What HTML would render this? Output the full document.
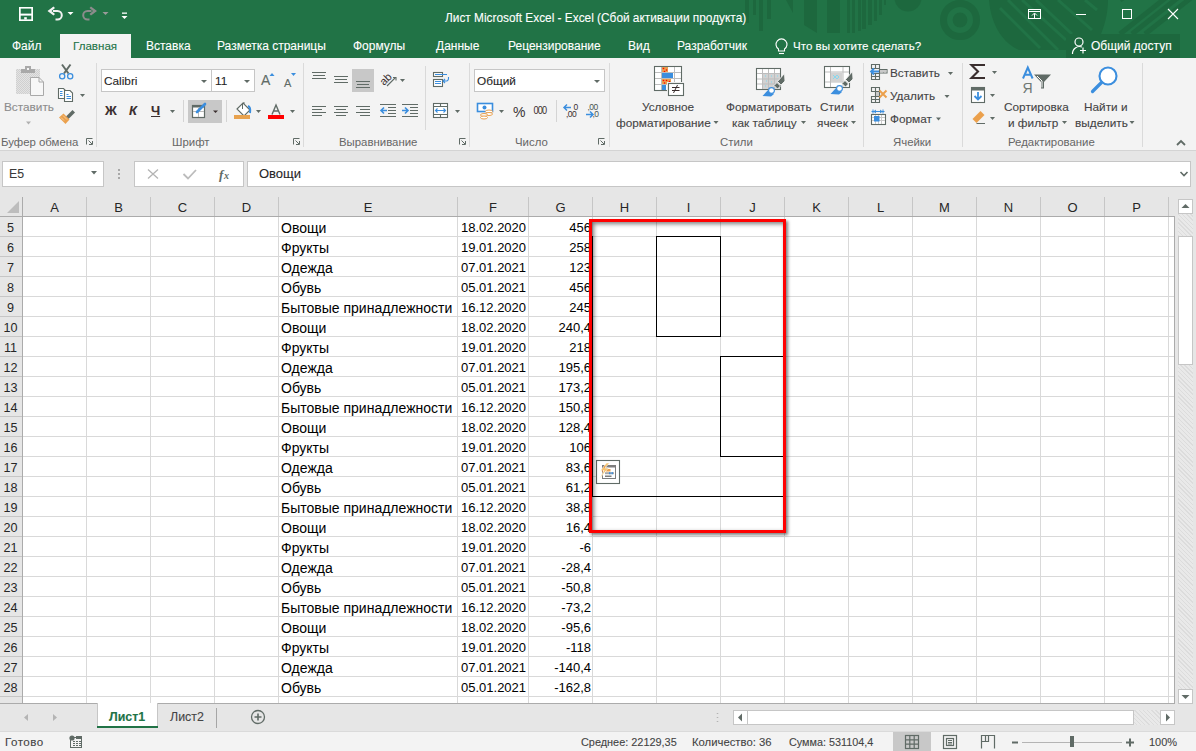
<!DOCTYPE html><html><head><meta charset="utf-8"><style>*{margin:0;padding:0;box-sizing:border-box}
html,body{width:1196px;height:751px;overflow:hidden;background:#e6e6e6;font-family:"Liberation Sans",sans-serif;position:relative}
.abs{position:absolute}
#title{position:absolute;left:0;top:0;width:1196px;height:58px;background:#217346;overflow:hidden}
.tt{position:absolute;color:#fff;font-size:11.85px;white-space:nowrap;line-height:16px;-webkit-text-stroke:0.1px currentColor}
.tab{position:absolute;top:38px;color:#fff;font-size:12px;white-space:nowrap;line-height:16px;-webkit-text-stroke:0.1px currentColor}
#ribbon{position:absolute;left:0;top:58px;width:1196px;height:93px;background:#f3f3f3;border-bottom:1px solid #d4d4d4}
.gl{position:absolute;top:135px;color:#666;font-size:11.4px;line-height:15px;white-space:nowrap}
.sep{position:absolute;top:63px;width:1px;height:84px;background:#dadada}
.rt{position:absolute;color:#444;font-size:11.8px;line-height:16px;white-space:nowrap;-webkit-text-stroke:0.1px currentColor}
.dd{position:absolute;width:0;height:0;border-left:3.5px solid transparent;border-right:3.5px solid transparent;border-top:4px solid #6b6b6b}
.colhdr{position:absolute;background:#e6e6e6}
.corner{position:absolute;left:0;top:197px;width:22px;height:19px}
.ch{position:absolute;top:197px;height:19px;line-height:21px;text-align:center;font-size:13px;color:#262626}
.chl{position:absolute;top:197px;width:1px;height:19px;background:#c6c6c6}
.vl{position:absolute;top:217px;width:1px;height:486px;background:#d9d9d9}
.hl{position:absolute;left:23px;width:1151px;height:1px;background:#d9d9d9}
.rhl{position:absolute;left:0;width:22px;height:1px;background:#c6c6c6}
.rn{position:absolute;left:0;width:21px;height:19px;line-height:20px;font-size:12.6px;color:#262626;text-align:center}
.cell{position:absolute;height:19px;line-height:20px;font-size:14px;color:#000;white-space:nowrap}
.n{font-size:13px;letter-spacing:0}
.r{text-align:right}
.st{position:absolute;top:735px;font-size:12px;color:#444;line-height:14px;white-space:nowrap;-webkit-text-stroke:0.1px currentColor}
</style></head><body><div id="title">
<svg width="1196" height="58" style="position:absolute;left:0;top:0">
  <g fill="#1d683e">
    <rect x="745" y="0" width="4" height="23"/>
    <rect x="753" y="0" width="3" height="15"/>
    <rect x="759" y="0" width="4" height="31"/>
    <rect x="767" y="0" width="4" height="19"/>
    <path d="M786 0 H793 V13 Z"/>
    <path d="M804 0 H817 V33 L804 25 Z"/>
    <rect x="827" y="0" width="13" height="33"/>
    <rect x="847" y="0" width="3" height="33"/>
    <rect x="852" y="0" width="3" height="33"/>
    <rect x="858" y="0" width="3" height="31"/>
    <rect x="862" y="0" width="4" height="29"/>
    <rect x="868" y="0" width="4" height="25"/>
    <rect x="874" y="0" width="3" height="21"/>
    <rect x="879" y="0" width="3" height="15"/>
    <rect x="884" y="0" width="2" height="5"/>
    <circle cx="908" cy="-2" r="13.5"/>
    <circle cx="960" cy="20" r="16.5" fill="none" stroke="#1d683e" stroke-width="7"/>
    <circle cx="960" cy="20" r="7.4"/>
    <path d="M989 0 C991 25 1003 43 1019 50 L1066 50 L1066 34 L1101 34 C1106 22 1108 10 1108 0 Z"/>
  </g>
  <g stroke="#217346" stroke-width="3">
    <path d="M1000 8 L1040 48"/>
    <path d="M1008 0 L1058 50"/>
    <path d="M1022 0 L1066 40"/>
    <path d="M1036 0 L1072 34"/>
    <path d="M1058 0 L1092 30"/>
    <path d="M1085 0 L1097 10"/>
  </g>
  <g stroke="#1d683e" stroke-width="5">
    <path d="M1120 34 L1168 -4"/>
    <path d="M1132 34 L1180 -4"/>
    <path d="M1145 34 L1196 -6"/>
    <path d="M1120 0 L1135 -10"/>
  </g>
  <rect x="1066" y="34" width="114" height="24" fill="#1d683e"/>
  <!-- save -->
  <rect x="19" y="7" width="14" height="14" fill="#fff"/>
  <rect x="20.7" y="8.6" width="10.6" height="5" fill="#217346"/>
  <rect x="20.7" y="15.6" width="10.6" height="3.8" fill="#217346"/>
  <rect x="24.2" y="17.2" width="2.6" height="2.3" fill="#fff"/>
  <!-- undo -->
  <path d="M47.5 11 L53.5 6.5 L55 8 L51.5 11 L55 14 L53.5 15.5 Z" fill="#f2f2f2"/>
  <path d="M53 11 H57.5 A4.3 4.3 0 0 1 57.5 19.6 H55.5" fill="none" stroke="#f2f2f2" stroke-width="2"/>
  <path d="M67.5 12 L73.5 12 L70.5 15 Z" fill="#fff"/>
  <!-- redo -->
  <path d="M97 11 L91 6.5 L89.5 8 L93 11 L89.5 14 L91 15.5 Z" fill="#8c8c8c"/>
  <path d="M91.5 11 H87.5 A4.3 4.3 0 0 0 87.5 19.6 H89.5" fill="none" stroke="#8c8c8c" stroke-width="2"/>
  <path d="M102.5 12 L108.5 12 L105.5 15 Z" fill="#9a9a9a"/>
  <!-- customize -->
  <rect x="122" y="12.5" width="5" height="1.3" fill="#fff"/>
  <path d="M121.5 16 L127.5 16 L124.5 19 Z" fill="#fff"/>
  <!-- ribbon display options -->
  <rect x="1028.5" y="9.5" width="12" height="9" fill="none" stroke="#fff" stroke-width="1"/>
  <line x1="1029" y1="11.5" x2="1040" y2="11.5" stroke="#fff"/>
  <path d="M1034.5 18 L1034.5 13.5 M1032 15.5 L1034.5 13 L1037 15.5" fill="none" stroke="#fff" stroke-width="1"/>
  <!-- min -->
  <line x1="1076" y1="14.5" x2="1086" y2="14.5" stroke="#fff"/>
  <!-- max -->
  <rect x="1122.5" y="9.5" width="9" height="9" fill="none" stroke="#fff"/>
  <!-- close -->
  <path d="M1168 9 L1178 19 M1178 9 L1168 19" stroke="#fff" stroke-width="1.1"/>
  <!-- lightbulb -->
  <g fill="none" stroke="#fff" stroke-width="1.1">
    <path d="M778.5 51 L778.5 49 A5.5 5.5 0 1 1 784.5 49 L784.5 51 Z"/>
    <line x1="779" y1="53.5" x2="784" y2="53.5"/>
  </g>
  <!-- share person -->
  <g fill="none" stroke="#fff" stroke-width="1.2">
    <circle cx="1079" cy="42" r="4"/>
    <path d="M1072.5 54 A7 7 0 0 1 1082 47"/>
    <path d="M1080 50.5 L1086 50.5 M1083 47.5 L1083 53.5"/>
  </g>
</svg>
  <div class="tt" style="left:445px;top:10px">Лист Microsoft Excel - Excel (Сбой активации продукта)</div>
  <div class="tab" style="left:12px">Файл</div>
  <div style="position:absolute;left:60px;top:34px;width:71px;height:24px;background:#f3f3f3"></div>
  <div class="tab" style="left:73px;color:#217346;font-size:11.6px">Главная</div>
  <div class="tab" style="left:146px">Вставка</div>
  <div class="tab" style="left:217px">Разметка страницы</div>
  <div class="tab" style="left:353px">Формулы</div>
  <div class="tab" style="left:436px">Данные</div>
  <div class="tab" style="left:508px">Рецензирование</div>
  <div class="tab" style="left:628px">Вид</div>
  <div class="tab" style="left:677px">Разработчик</div>
  <div class="tab" style="left:793px;font-size:11.6px">Что вы хотите сделать?</div>
  <div class="tab" style="left:1091px">Общий доступ</div>
</div>
<div id="ribbon"></div>
<div class="gl" style="left:1px">Буфер обмена</div>
<div class="sep" style="left:96px"></div>
<div class="gl" style="left:172px">Шрифт</div>
<div class="sep" style="left:303px"></div>
<div class="gl" style="left:339px">Выравнивание</div>
<div class="sep" style="left:469px"></div>
<div class="gl" style="left:515px">Число</div>
<div class="sep" style="left:609px"></div>
<div class="gl" style="left:720px">Стили</div>
<div class="sep" style="left:863px"></div>
<div class="gl" style="left:893px">Ячейки</div>
<div class="sep" style="left:962px"></div>
<div class="gl" style="left:1008px">Редактирование</div>
<div class="sep" style="left:1142px"></div>

<!-- formula bar -->
<div style="position:absolute;left:2px;top:161px;width:102px;height:26px;background:#fff;border:1px solid #c6c6c6"></div>
<div class="rt" style="left:9px;top:166px;color:#3a3a3a;font-size:12.3px">E5</div>
<div style="position:absolute;left:134px;top:161px;width:110px;height:26px;background:#fff;border:1px solid #c6c6c6"></div>
<div style="position:absolute;left:247px;top:161px;width:944px;height:26px;background:#fff;border:1px solid #c6c6c6"></div>
<div class="rt" style="left:259px;top:166px;color:#262626;font-size:13px">Овощи</div>
<svg width="1196" height="40" style="position:absolute;left:0;top:155px">
  <path d="M91 16 L97 16 L94 19.5 Z" fill="#606b66"/>
  <path d="M119 14 v2 M119 18 v2 M119 22 v2" stroke="#a8a8a8" stroke-width="2"/>
  <path d="M148 14.5 L158 23.5 M158 14.5 L148 23.5" stroke="#b4b4b4" stroke-width="1.3"/>
  <path d="M183.5 19 L188 23.5 L196 15" fill="none" stroke="#bcbcbc" stroke-width="1.8"/>
  <text x="219" y="24" font-family="Liberation Serif" font-style="italic" font-weight="bold" font-size="13" fill="#606b66">f</text>
  <text x="224" y="24" font-family="Liberation Serif" font-style="italic" font-weight="bold" font-size="10" fill="#606b66">x</text>
  <path d="M1180.5 17 L1184 20.5 L1187.5 17" fill="none" stroke="#606b66" stroke-width="1.6"/>
</svg>
<svg width="1196" height="151" style="position:absolute;left:0;top:0" shape-rendering="auto">
<defs>
  <pattern id="dots" width="3" height="3" patternUnits="userSpaceOnUse"><rect width="3" height="3" fill="#c8c8c8"/><rect x="1" y="1" width="1" height="1" fill="#d9d9d9"/></pattern>
  <pattern id="chk" width="2" height="2" patternUnits="userSpaceOnUse"><rect width="2" height="2" fill="#e3e3e3"/><rect width="1" height="1" fill="#cfcfcf"/><rect x="1" y="1" width="1" height="1" fill="#cfcfcf"/></pattern>
</defs>
<!-- ===== Clipboard ===== -->
<rect x="16" y="69" width="24" height="25" fill="url(#chk)"/>
<rect x="21" y="69" width="14" height="4" fill="#a9a9a9"/>
<rect x="25" y="66" width="6" height="4" fill="#a9a9a9"/>
<rect x="27" y="68" width="2" height="2" fill="#f3f3f3"/>
<path d="M30.5 77.5 H39 L43.5 82 V95.5 H30.5 Z" fill="#f7f7f7" stroke="#a9a9a9" stroke-width="1"/>
<path d="M39 77.5 V82 H43.5" fill="none" stroke="#a9a9a9"/>
<path d="M26 121.5 L31 121.5 L28.5 124.5 Z" fill="#b0b0b0"/>
<!-- scissors -->
<path d="M62 64.5 L68.5 73.5 M70.5 64.5 L64 73.5" stroke="#606b66" stroke-width="2"/>
<circle cx="62.2" cy="76.2" r="2.6" fill="none" stroke="#3b8ede" stroke-width="1.3"/>
<circle cx="70.2" cy="76.2" r="2.6" fill="none" stroke="#3b8ede" stroke-width="1.3"/>
<!-- copy -->
<path d="M58.5 88.5 H63.5 L65.5 90.5 V98.5 H58.5 Z" fill="#fff" stroke="#606b66" stroke-width="1.1"/>
<path d="M64.5 90.5 H70 L72.5 93 V101.5 H64.5 Z" fill="#fff" stroke="#606b66" stroke-width="1.1"/>
<path d="M60 91.5 H62.5 M60 93.5 H62.5 M60 95.5 H62.5 M66.5 94.5 H68.5 M66.5 96.5 H71 M66.5 98.5 H71" stroke="#3b8ede" stroke-width="1"/>
<path d="M80 94 L85 94 L82.5 97 Z" fill="#606b66"/>
<!-- painter -->
<path d="M66 112.5 L72.5 106 L75 108.5 L68.5 115 Z" fill="#606b66" transform="translate(0,4)"/>
<path d="M59 117.5 L63.5 113.5 L69.5 119.5 L65.5 124 Z" fill="#eba04c"/>
<path d="M61 117.5 L64 120.5 M63 115.5 L67 119.5" stroke="#f6d7ae" stroke-width="0.8"/>

<!-- ===== Font ===== -->
<rect x="101.5" y="69.5" width="110" height="22" fill="#fff" stroke="#c6c6c6"/>
<rect x="211.5" y="69.5" width="43" height="22" fill="#fff" stroke="#c6c6c6"/>
<path d="M201 80 L207 80 L204 83 Z" fill="#606b66"/>
<path d="M244 80 L250 80 L247 83 Z" fill="#606b66"/>
<path d="M269.5 76 L274.5 76 L272 73 Z" fill="#3b8ede"/>
<path d="M291 73 L296 73 L293.5 76 Z" fill="#3b8ede"/>
<!-- borders button highlight -->
<rect x="188" y="100" width="34" height="23" fill="#c8c8c8"/>
<rect x="183" y="100" width="1" height="22" fill="#d4d4d4"/>
<rect x="226" y="100" width="1" height="22" fill="#d4d4d4"/>
<path d="M170 110 L175 110 L172.5 113 Z" fill="#606b66"/>
<rect x="192.5" y="105.5" width="12" height="12" fill="#fff" stroke="#606b66" stroke-width="1.2"/>
<rect x="192.5" y="105.5" width="12" height="2" fill="#606b66"/>
<path d="M198.5 107 V117 M193 111.5 H204" stroke="#b9b9b9" stroke-width="1"/>
<path d="M197 112 L205 104" stroke="#3b8ede" stroke-width="2.6" stroke-linecap="round"/>
<path d="M213 110.5 L218 110.5 L215.5 113 Z" fill="#3a2e2e"/>
<!-- fill color -->
<path d="M237 109 L243 103 L250 110 L244 116 Z" fill="#fff" stroke="#606b66" stroke-width="1.1"/>
<path d="M242.5 109 V103.5 A1.5 1.5 0 0 1 245 103.5" fill="none" stroke="#606b66" stroke-width="1"/>
<path d="M248 106 Q251 107 250 113" fill="none" stroke="#3b8ede" stroke-width="2"/>
<rect x="234" y="115" width="16" height="4" fill="#e8a24e"/>
<path d="M256 110 L261 110 L258.5 113 Z" fill="#606b66"/>
<!-- font color -->
<path d="M272 114.5 L276 105 L280 114.5 M273.5 111 H278.5" fill="none" stroke="#606b66" stroke-width="1.4"/>
<rect x="268" y="115" width="16" height="4" fill="#ff0000"/>
<path d="M290 110 L295 110 L292.5 113 Z" fill="#606b66"/>
<!-- launchers -->
<g fill="none" stroke="#606b66" stroke-width="1">
  <path d="M86.5 144.5 V138.5 H92.5"/><path d="M88.5 140.5 L92 144 M92.5 141 V144.5 H89"/>
  <path d="M293.5 144.5 V138.5 H299.5"/><path d="M295.5 140.5 L299 144 M299.5 141 V144.5 H296"/>
  <path d="M459.5 144.5 V138.5 H465.5"/><path d="M461.5 140.5 L465 144 M465.5 141 V144.5 H462"/>
  <path d="M598.5 144.5 V138.5 H604.5"/><path d="M600.5 140.5 L604 144 M604.5 141 V144.5 H601"/>
</g>

<!-- ===== Alignment ===== -->
<g stroke="#606b66" stroke-width="1.1">
  <path d="M312 72.5 H326 M313 75.5 H325 M312 78.5 H326"/>
  <path d="M334 76.5 H348 M335 79.5 H347 M334 82.5 H348"/>
</g>
<rect x="352" y="69" width="22" height="23" fill="#c8c8c8"/>
<g stroke="#606b66" stroke-width="1.1">
  <path d="M356 81.5 H370 M357 84.5 H369 M356 87.5 H370"/>
  <path d="M312 106.5 H326 M312 109.5 H322 M312 112.5 H326 M312 115.5 H322"/>
  <path d="M334 106.5 H348 M336 109.5 H346 M334 112.5 H348 M336 115.5 H346"/>
  <path d="M356 106.5 H370 M360 109.5 H370 M356 112.5 H370 M360 115.5 H370"/>
  <path d="M380 104.5 H396 M388 107.5 H396 M388 110.5 H396 M388 113.5 H396 M380 116.5 H396"/>
  <path d="M402 104.5 H418 M410 107.5 H418 M410 110.5 H418 M410 113.5 H418 M402 116.5 H418"/>
</g>
<path d="M381 110.5 H387 M384 107.5 L381 110.5 L384 113.5" fill="none" stroke="#3b8ede" stroke-width="1.6"/>
<path d="M402 110.5 H408 M405 107.5 L408 110.5 L405 113.5" fill="none" stroke="#3b8ede" stroke-width="1.6"/>
<!-- orientation -->
<text x="0" y="0" font-family="Liberation Sans" font-size="11" fill="#3a2e2e" transform="translate(384,86) rotate(-45)">ab</text>
<path d="M387 86 L395.5 77.5" stroke="#606b66" stroke-width="1.1"/>
<path d="M393 77.5 H396 V80.5" fill="none" stroke="#606b66" stroke-width="1.1"/>
<path d="M400 79 L405 79 L402.5 82 Z" fill="#606b66"/>
<rect x="425" y="66" width="1" height="64" fill="#d9d9d9"/>
<!-- wrap -->
<rect x="433.5" y="72.5" width="9" height="4" fill="#fff" stroke="#606b66" stroke-width="1.1"/>
<rect x="433.5" y="79.5" width="9" height="7" fill="#fff" stroke="#606b66" stroke-width="1.1"/>
<path d="M435 74.5 H447 M435 81.5 H441 M435 83.5 H441" stroke="#3b8ede" stroke-width="1.1"/>
<path d="M448.5 77 V78.5 A2.5 2.5 0 0 1 446 81 H443 M445 79 L443 81 L445 83" fill="none" stroke="#3b8ede" stroke-width="1.1"/>
<!-- merge -->
<rect x="433.5" y="103.5" width="14" height="14" fill="#fff" stroke="#606b66" stroke-width="1.1"/>
<path d="M434 106.5 H447 M434 114.5 H447 M440.5 104 V106 M440.5 115 V117" stroke="#606b66" stroke-width="1.1"/>
<path d="M435.5 110.5 H445.5 M437.5 108.5 L435.5 110.5 L437.5 112.5 M443.5 108.5 L445.5 110.5 L443.5 112.5" fill="none" stroke="#3b8ede" stroke-width="1.1"/>
<path d="M455 110 L460 110 L457.5 113 Z" fill="#606b66"/>

<!-- ===== Number ===== -->
<rect x="474.5" y="69.5" width="130" height="22" fill="#fff" stroke="#c6c6c6"/>
<path d="M594 80 L600 80 L597 83 Z" fill="#606b66"/>
<rect x="477.5" y="103.5" width="15" height="8" fill="#fff" stroke="#3b8ede" stroke-width="1.6"/>
<circle cx="484.5" cy="107.5" r="2" fill="#3b8ede"/>
<g fill="none" stroke="#e9a04f" stroke-width="1">
  <ellipse cx="489" cy="111.5" rx="3.5" ry="1.5" fill="#fff"/>
  <ellipse cx="489" cy="114" rx="3.5" ry="1.5" fill="#fff"/>
  <ellipse cx="484" cy="115" rx="3.5" ry="1.5" fill="#fff"/>
  <ellipse cx="484" cy="117.5" rx="3.5" ry="1.5" fill="#fff"/>
</g>
<path d="M499 110 L504 110 L501.5 113 Z" fill="#606b66"/>
<text x="513" y="117" font-family="Liberation Sans" font-size="14" fill="#3a3535">%</text>
<text x="533.5" y="114.5" font-family="Liberation Sans" font-size="10" fill="#3a2e2e" letter-spacing="-0.9" transform="translate(533.5,0) scale(0.92,1) translate(-533.5,0)">000</text>
<rect x="556" y="100" width="1" height="22" fill="#d4d4d4"/>
<path d="M564 107.5 H571 M567 104.5 L564 107.5 L567 110.5" fill="none" stroke="#3b8ede" stroke-width="1.5"/>
<text x="573.5" y="110" font-family="Liberation Sans" font-size="8.5" fill="#3a2e2e">0</text>
<text x="566" y="117" font-family="Liberation Sans" font-size="8.5" fill="#3a2e2e" letter-spacing="-0.6">,00</text>
<text x="587.5" y="110" font-family="Liberation Sans" font-size="8.5" fill="#4a5550" letter-spacing="-0.6">,00</text>
<path d="M586 114.5 H593 M590 111.5 L593 114.5 L590 117.5" fill="none" stroke="#3b8ede" stroke-width="1.5"/>
<text x="592.5" y="117" font-family="Liberation Sans" font-size="8.5" fill="#4a5550" letter-spacing="-0.6">,0</text>

<!-- ===== Styles ===== -->
<g>
  <rect x="654.5" y="66.5" width="27" height="24" fill="#fff"/>
  <rect x="661" y="66.5" width="7" height="6" fill="#eaa04e"/>
  <rect x="661" y="72.5" width="12" height="6" fill="#3b8ede"/>
  <rect x="661" y="78.5" width="10" height="6" fill="#eaa04e"/>
  <rect x="661" y="84.5" width="5" height="6" fill="#3b8ede"/>
  <circle cx="663.5" cy="68.5" r="0.8" fill="#f00"/><circle cx="666.5" cy="70" r="0.8" fill="#f00"/><circle cx="664.5" cy="71.5" r="0.8" fill="#f00"/>
  <circle cx="663.5" cy="80.5" r="0.8" fill="#f00"/><circle cx="666.5" cy="80.5" r="0.8" fill="#f00"/><circle cx="669.5" cy="81.5" r="0.8" fill="#f00"/><circle cx="664.5" cy="83" r="0.8" fill="#f00"/>
  <path d="M655 72.5 H681 M655 78.5 H681 M655 84.5 H668 M661.5 67 V90 M674.5 67 V84" stroke="#bdbdbd" stroke-width="1"/>
  <rect x="654.5" y="66.5" width="27" height="24" fill="none" stroke="#606b66" stroke-width="1.1"/>
  <rect x="667" y="82" width="18" height="15" fill="#f3f3f3"/>
  <rect x="668.5" y="83.5" width="15" height="12" fill="#fff" stroke="#606b66" stroke-width="1.1"/>
  <path d="M672 87.5 H679.5 M672 90.5 H679.5 M677.5 85 L673.5 93" stroke="#3a2e2e" stroke-width="1"/>
</g>
<!-- format as table -->
<g>
  <rect x="756.5" y="68.5" width="24" height="21" fill="#fff" stroke="#606b66" stroke-width="1.1"/>
  <rect x="763" y="74" width="17" height="15" fill="#d2d2d2"/>
  <path d="M757 73.5 H780 M757 79 H780 M757 84 H780 M762.5 69 V89 M768.5 69 V89 M774.5 69 V89" stroke="#bdbdbd" stroke-width="1"/>
  <path d="M765 76 h1 M771 76 h1 M777 76 h1 M766 81 h1 M771 82 h1 M765 86 h1" stroke="#7fd8f0" stroke-width="1"/>
  <g>
  <path d="M784.5 73.5 L785 81 L781 85 L777.5 81.5 Z" fill="#606b66" stroke="#f3f3f3" stroke-width="0.9"/>
  <path d="M777 82.5 L780.5 86 L777.5 89 L774 85.5 Z" fill="#606b66" stroke="#f3f3f3" stroke-width="0.9"/>
  <path d="M762.5 96 L768.5 89.5 L774 94 L771 96.5 Z" fill="#3b8ede"/>
  <circle cx="771.5" cy="90.5" r="2.9" fill="#fff" stroke="#3b8ede" stroke-width="1.1"/>
  </g>
</g>
<!-- cell styles -->
<g>
  <rect x="824.5" y="66.5" width="25" height="21" fill="#fff" stroke="#606b66" stroke-width="1.1"/>
  <path d="M825 72 H849 M825 82 H849 M830.5 67 V87 M843 67 V87" stroke="#bdbdbd" stroke-width="1"/>
  <rect x="831" y="72.5" width="11.5" height="9.5" fill="#d2d2d2"/>
  <path d="M833 75 l2 2 l2 -2 l2 2 M833 79 l2 -2 l2 2 l2 -2" stroke="#7fd8f0" stroke-width="0.9" fill="none"/>
  <g transform="translate(68,-2)">
  <path d="M784.5 73.5 L785 81 L781 85 L777.5 81.5 Z" fill="#606b66" stroke="#f3f3f3" stroke-width="0.9"/>
  <path d="M777 82.5 L780.5 86 L777.5 89 L774 85.5 Z" fill="#606b66" stroke="#f3f3f3" stroke-width="0.9"/>
  <path d="M762.5 96 L768.5 89.5 L774 94 L771 96.5 Z" fill="#3b8ede"/>
  <circle cx="771.5" cy="90.5" r="2.9" fill="#fff" stroke="#3b8ede" stroke-width="1.1"/>
  </g>
</g>
<path d="M713.5 121 L718.5 121 L716 124 Z" fill="#606b66"/>
<path d="M801 121 L806 121 L803.5 124 Z" fill="#606b66"/>
<path d="M851 121 L856 121 L853.5 124 Z" fill="#606b66"/>

<!-- ===== Cells ===== -->
<g fill="none" stroke="#606b66" stroke-width="1.1">
  <path d="M871.5 64.5 H879.5 V68.5 H871.5 Z M875.5 64.5 V68.5"/>
  <path d="M871.5 73.5 H879.5 V79.5 H871.5 Z M871.5 76.5 H879.5 M875.5 73.5 V79.5"/>
  <path d="M879.5 69.5 H887 V73 H879.5 Z M883.5 69.5 V73"/>
  <path d="M871.5 87.5 H879.5 V91.5 H871.5 Z M875.5 87.5 V91.5"/>
  <path d="M871.5 96.5 H879.5 V102.5 H871.5 Z M871.5 99.5 H879.5 M875.5 96.5 V102.5"/>
  <path d="M875.5 91.5 H879.5 V96.5 H875.5 Z"/>
</g>
<rect x="880" y="70" width="6.5" height="2.5" fill="#c9c9c9"/>
<rect x="876" y="92" width="3" height="4" fill="#c9c9c9"/>
<path d="M871 71.5 H879 M874 68.5 L871 71.5 L874 74.5" fill="none" stroke="#3b8ede" stroke-width="1.8"/>
<path d="M879.5 90.5 L886.5 97.5 M886.5 90.5 L879.5 97.5" stroke="#eba04c" stroke-width="2"/>
<path d="M871.5 111.5 H884.5 M873 109.5 V113.5 M883 109.5 V113.5 M874 111.5 l2 -1.5 M874 111.5 l2 1.5 M882 111.5 l-2 -1.5 M882 111.5 l-2 1.5" fill="none" stroke="#3b8ede" stroke-width="1"/>
<rect x="871.5" y="114.5" width="14" height="10" fill="#fff" stroke="#606b66" stroke-width="1.1"/>
<path d="M872 117.5 H885 M872 120.5 H885 M875.5 115 V124 M878.5 115 V124 M881.5 115 V124" stroke="#c9c9c9" stroke-width="1"/>
<rect x="874" y="116" width="5.5" height="5.5" fill="#3b8ede"/>
<path d="M948 72 L953 72 L950.5 75 Z" fill="#606b66"/>
<path d="M944.5 95 L949.5 95 L947 98 Z" fill="#606b66"/>
<path d="M936 117.5 L941 117.5 L938.5 120.5 Z" fill="#606b66"/>

<!-- ===== Editing ===== -->
<path d="M985 65 H971.5 L978 71.5 L971.5 78 H985" fill="none" stroke="#3a2e2e" stroke-width="2.1"/>
<path d="M992 71 L997 71 L994.5 74 Z" fill="#606b66"/>
<rect x="971.5" y="87.5" width="13" height="15" fill="#fff" stroke="#606b66" stroke-width="1.1"/>
<rect x="971" y="87" width="14" height="3.5" fill="#606b66"/>
<path d="M978 92 V99 M974.5 96 L978 99.5 L981.5 96" fill="none" stroke="#3b8ede" stroke-width="1.8"/>
<path d="M990 94 L995 94 L992.5 97 Z" fill="#606b66"/>
<path d="M972.5 119 L980.5 111 L984.5 115 L976.5 123 Z" fill="#eba04c"/>
<path d="M976.5 123.5 H985" stroke="#606b66" stroke-width="1"/>
<path d="M990 117 L995 117 L992.5 120 Z" fill="#606b66"/>
<!-- sort -->
<path d="M1023 78.5 L1027.8 67.5 L1032.6 78.5 M1024.8 74.8 H1030.8" fill="none" stroke="#3b8ede" stroke-width="2"/>
<text x="1022.5" y="92.5" font-family="Liberation Sans" font-size="14" fill="#6f7873">Я</text>
<path d="M1034 74.5 H1051 L1044 82 V88.5 H1041 V82 Z" fill="#606b66"/>
<path d="M1037 76 L1042 81 V87.5" stroke="#fff" stroke-width="1" fill="none"/>
<!-- find -->
<circle cx="1108" cy="76" r="8.5" fill="#fff" stroke="#3b8ede" stroke-width="2.1"/>
<path d="M1101.5 82.5 L1092.5 91.5" stroke="#3b8ede" stroke-width="3.2" stroke-linecap="round"/>
<path d="M1062 121 L1067 121 L1064.5 124 Z" fill="#606b66"/>
<path d="M1129.5 121 L1134.5 121 L1132 124 Z" fill="#606b66"/>
<path d="M1177 145 L1181 141 L1185 145" fill="none" stroke="#606b66" stroke-width="1.8"/>
</svg>
<div class="rt" style="left:4px;top:99px;color:#8c8c8c">Вставить</div>
<div class="rt" style="left:104px;top:73px;color:#262626">Calibri</div>
<div class="rt" style="left:215px;top:73px;color:#262626">11</div>
<div class="rt" style="left:477px;top:73px;color:#262626">Общий</div>
<div class="rt" style="left:261px;top:72px;font-size:14px;color:#606b66">A</div>
<div class="rt" style="left:284px;top:75px;font-size:11px;color:#606b66">A</div>
<div class="rt" style="left:105px;top:103px;font-size:13px;font-weight:bold;color:#3a2e2e">Ж</div>
<div class="rt" style="left:129px;top:103px;font-size:13px;font-style:italic;font-weight:bold;color:#3a2e2e">К</div>
<div class="rt" style="left:151px;top:103px;font-size:13px;font-weight:bold;color:#3a2e2e;text-decoration:underline">Ч</div>
<div class="rt" style="left:642px;top:99px">Условное</div>
<div class="rt" style="left:616px;top:115px">форматирование</div>
<div class="rt" style="left:726px;top:99px">Форматировать</div>
<div class="rt" style="left:732px;top:115px">как таблицу</div>
<div class="rt" style="left:820px;top:99px">Стили</div>
<div class="rt" style="left:817px;top:115px">ячеек</div>
<div class="rt" style="left:890px;top:65px">Вставить</div>
<div class="rt" style="left:890px;top:88px">Удалить</div>
<div class="rt" style="left:890px;top:111px">Формат</div>
<div class="rt" style="left:1004px;top:99px">Сортировка</div>
<div class="rt" style="left:1008px;top:115px">и фильтр</div>
<div class="rt" style="left:1084px;top:99px">Найти и</div>
<div class="rt" style="left:1075px;top:115px">выделить</div>
<div id="grid" style="position:absolute;left:0;top:0;width:1196px;height:703px;overflow:hidden"><div class="colhdr" style="left:0;top:197px;width:1175px;height:19px"></div><svg width="22" height="19" style="position:absolute;left:0;top:197px"><path d="M7 16 L19 16 L19 4 Z" fill="#bdbdbd"/></svg><div class="ch" style="left:23px;width:63px">A</div><div class="chl" style="left:86px"></div><div class="ch" style="left:87px;width:63px">B</div><div class="chl" style="left:150px"></div><div class="ch" style="left:151px;width:63px">C</div><div class="chl" style="left:214px"></div><div class="ch" style="left:215px;width:63px">D</div><div class="chl" style="left:278px"></div><div class="ch" style="left:279px;width:178px">E</div><div class="chl" style="left:457px"></div><div class="ch" style="left:458px;width:70px">F</div><div class="chl" style="left:528px"></div><div class="ch" style="left:529px;width:63px">G</div><div class="chl" style="left:592px"></div><div class="ch" style="left:593px;width:63px">H</div><div class="chl" style="left:656px"></div><div class="ch" style="left:657px;width:63px">I</div><div class="chl" style="left:720px"></div><div class="ch" style="left:721px;width:63px">J</div><div class="chl" style="left:784px"></div><div class="ch" style="left:785px;width:63px">K</div><div class="chl" style="left:848px"></div><div class="ch" style="left:849px;width:63px">L</div><div class="chl" style="left:912px"></div><div class="ch" style="left:913px;width:63px">M</div><div class="chl" style="left:976px"></div><div class="ch" style="left:977px;width:63px">N</div><div class="chl" style="left:1040px"></div><div class="ch" style="left:1041px;width:63px">O</div><div class="chl" style="left:1104px"></div><div class="ch" style="left:1105px;width:63px">P</div><div class="chl" style="left:1168px"></div><div class="chl" style="left:22px"></div><div style="position:absolute;left:0;top:216px;width:1175px;height:1px;background:#ababab"></div><div style="position:absolute;left:0;top:217px;width:22px;height:486px;background:#e6e6e6"></div><div style="position:absolute;left:22px;top:197px;width:1px;height:506px;background:#ababab"></div><div style="position:absolute;left:23px;top:217px;width:1151px;height:486px;background:#fff"></div><div class="vl" style="left:86px"></div><div class="vl" style="left:150px"></div><div class="vl" style="left:214px"></div><div class="vl" style="left:278px"></div><div class="vl" style="left:457px"></div><div class="vl" style="left:528px"></div><div class="vl" style="left:592px"></div><div class="vl" style="left:656px"></div><div class="vl" style="left:720px"></div><div class="vl" style="left:784px"></div><div class="vl" style="left:848px"></div><div class="vl" style="left:912px"></div><div class="vl" style="left:976px"></div><div class="vl" style="left:1040px"></div><div class="vl" style="left:1104px"></div><div class="vl" style="left:1168px"></div><div class="hl" style="top:236px"></div><div class="rhl" style="top:236px"></div><div class="hl" style="top:256px"></div><div class="rhl" style="top:256px"></div><div class="hl" style="top:276px"></div><div class="rhl" style="top:276px"></div><div class="hl" style="top:296px"></div><div class="rhl" style="top:296px"></div><div class="hl" style="top:316px"></div><div class="rhl" style="top:316px"></div><div class="hl" style="top:336px"></div><div class="rhl" style="top:336px"></div><div class="hl" style="top:356px"></div><div class="rhl" style="top:356px"></div><div class="hl" style="top:376px"></div><div class="rhl" style="top:376px"></div><div class="hl" style="top:396px"></div><div class="rhl" style="top:396px"></div><div class="hl" style="top:416px"></div><div class="rhl" style="top:416px"></div><div class="hl" style="top:436px"></div><div class="rhl" style="top:436px"></div><div class="hl" style="top:456px"></div><div class="rhl" style="top:456px"></div><div class="hl" style="top:476px"></div><div class="rhl" style="top:476px"></div><div class="hl" style="top:496px"></div><div class="rhl" style="top:496px"></div><div class="hl" style="top:516px"></div><div class="rhl" style="top:516px"></div><div class="hl" style="top:536px"></div><div class="rhl" style="top:536px"></div><div class="hl" style="top:556px"></div><div class="rhl" style="top:556px"></div><div class="hl" style="top:576px"></div><div class="rhl" style="top:576px"></div><div class="hl" style="top:596px"></div><div class="rhl" style="top:596px"></div><div class="hl" style="top:616px"></div><div class="rhl" style="top:616px"></div><div class="hl" style="top:636px"></div><div class="rhl" style="top:636px"></div><div class="hl" style="top:656px"></div><div class="rhl" style="top:656px"></div><div class="hl" style="top:676px"></div><div class="rhl" style="top:676px"></div><div class="hl" style="top:696px"></div><div class="rhl" style="top:696px"></div><div class="hl" style="top:716px"></div><div class="rhl" style="top:716px"></div><div class="rn" style="top:218px">5</div><div class="rn" style="top:238px">6</div><div class="rn" style="top:258px">7</div><div class="rn" style="top:278px">8</div><div class="rn" style="top:298px">9</div><div class="rn" style="top:318px">10</div><div class="rn" style="top:338px">11</div><div class="rn" style="top:358px">12</div><div class="rn" style="top:378px">13</div><div class="rn" style="top:398px">14</div><div class="rn" style="top:418px">15</div><div class="rn" style="top:438px">16</div><div class="rn" style="top:458px">17</div><div class="rn" style="top:478px">18</div><div class="rn" style="top:498px">19</div><div class="rn" style="top:518px">20</div><div class="rn" style="top:538px">21</div><div class="rn" style="top:558px">22</div><div class="rn" style="top:578px">23</div><div class="rn" style="top:598px">24</div><div class="rn" style="top:618px">25</div><div class="rn" style="top:638px">26</div><div class="rn" style="top:658px">27</div><div class="rn" style="top:678px">28</div><div class="rn" style="top:698px">29</div><div class="cell" style="left:281px;top:218px">Овощи</div><div class="cell n" style="left:461px;top:218px">18.02.2020</div><div class="cell n r" style="left:528px;width:63px;top:218px">456</div><div class="cell" style="left:281px;top:238px">Фрукты</div><div class="cell n" style="left:461px;top:238px">19.01.2020</div><div class="cell n r" style="left:528px;width:63px;top:238px">258</div><div class="cell" style="left:281px;top:258px">Одежда</div><div class="cell n" style="left:461px;top:258px">07.01.2021</div><div class="cell n r" style="left:528px;width:63px;top:258px">123</div><div class="cell" style="left:281px;top:278px">Обувь</div><div class="cell n" style="left:461px;top:278px">05.01.2021</div><div class="cell n r" style="left:528px;width:63px;top:278px">456</div><div class="cell" style="left:281px;top:298px">Бытовые принадлежности</div><div class="cell n" style="left:461px;top:298px">16.12.2020</div><div class="cell n r" style="left:528px;width:63px;top:298px">245</div><div class="cell" style="left:281px;top:318px">Овощи</div><div class="cell n" style="left:461px;top:318px">18.02.2020</div><div class="cell n r" style="left:528px;width:63px;top:318px">240,4</div><div class="cell" style="left:281px;top:338px">Фрукты</div><div class="cell n" style="left:461px;top:338px">19.01.2020</div><div class="cell n r" style="left:528px;width:63px;top:338px">218</div><div class="cell" style="left:281px;top:358px">Одежда</div><div class="cell n" style="left:461px;top:358px">07.01.2021</div><div class="cell n r" style="left:528px;width:63px;top:358px">195,6</div><div class="cell" style="left:281px;top:378px">Обувь</div><div class="cell n" style="left:461px;top:378px">05.01.2021</div><div class="cell n r" style="left:528px;width:63px;top:378px">173,2</div><div class="cell" style="left:281px;top:398px">Бытовые принадлежности</div><div class="cell n" style="left:461px;top:398px">16.12.2020</div><div class="cell n r" style="left:528px;width:63px;top:398px">150,8</div><div class="cell" style="left:281px;top:418px">Овощи</div><div class="cell n" style="left:461px;top:418px">18.02.2020</div><div class="cell n r" style="left:528px;width:63px;top:418px">128,4</div><div class="cell" style="left:281px;top:438px">Фрукты</div><div class="cell n" style="left:461px;top:438px">19.01.2020</div><div class="cell n r" style="left:528px;width:63px;top:438px">106</div><div class="cell" style="left:281px;top:458px">Одежда</div><div class="cell n" style="left:461px;top:458px">07.01.2021</div><div class="cell n r" style="left:528px;width:63px;top:458px">83,6</div><div class="cell" style="left:281px;top:478px">Обувь</div><div class="cell n" style="left:461px;top:478px">05.01.2021</div><div class="cell n r" style="left:528px;width:63px;top:478px">61,2</div><div class="cell" style="left:281px;top:498px">Бытовые принадлежности</div><div class="cell n" style="left:461px;top:498px">16.12.2020</div><div class="cell n r" style="left:528px;width:63px;top:498px">38,8</div><div class="cell" style="left:281px;top:518px">Овощи</div><div class="cell n" style="left:461px;top:518px">18.02.2020</div><div class="cell n r" style="left:528px;width:63px;top:518px">16,4</div><div class="cell" style="left:281px;top:538px">Фрукты</div><div class="cell n" style="left:461px;top:538px">19.01.2020</div><div class="cell n r" style="left:528px;width:63px;top:538px">-6</div><div class="cell" style="left:281px;top:558px">Одежда</div><div class="cell n" style="left:461px;top:558px">07.01.2021</div><div class="cell n r" style="left:528px;width:63px;top:558px">-28,4</div><div class="cell" style="left:281px;top:578px">Обувь</div><div class="cell n" style="left:461px;top:578px">05.01.2021</div><div class="cell n r" style="left:528px;width:63px;top:578px">-50,8</div><div class="cell" style="left:281px;top:598px">Бытовые принадлежности</div><div class="cell n" style="left:461px;top:598px">16.12.2020</div><div class="cell n r" style="left:528px;width:63px;top:598px">-73,2</div><div class="cell" style="left:281px;top:618px">Овощи</div><div class="cell n" style="left:461px;top:618px">18.02.2020</div><div class="cell n r" style="left:528px;width:63px;top:618px">-95,6</div><div class="cell" style="left:281px;top:638px">Фрукты</div><div class="cell n" style="left:461px;top:638px">19.01.2020</div><div class="cell n r" style="left:528px;width:63px;top:638px">-118</div><div class="cell" style="left:281px;top:658px">Одежда</div><div class="cell n" style="left:461px;top:658px">07.01.2021</div><div class="cell n r" style="left:528px;width:63px;top:658px">-140,4</div><div class="cell" style="left:281px;top:678px">Обувь</div><div class="cell n" style="left:461px;top:678px">05.01.2021</div><div class="cell n r" style="left:528px;width:63px;top:678px">-162,8</div><div style="position:absolute;left:1174px;top:216px;width:1px;height:488px;background:#ababab"></div><div style="position:absolute;left:0;top:703px;width:1175px;height:1px;background:#ababab"></div></div><!-- overlays in grid -->
<div style="position:absolute;left:592px;top:236px;width:1px;height:261px;background:#000"></div>
<div style="position:absolute;left:592px;top:496px;width:193px;height:1px;background:#000"></div>
<div style="position:absolute;left:656px;top:236px;width:65px;height:101px;border:1px solid #000"></div>
<div style="position:absolute;left:720px;top:356px;width:65px;height:101px;border:1px solid #000"></div>
<!-- flash fill icon -->
<svg width="26" height="26" style="position:absolute;left:595px;top:459px">
  <rect x="1.5" y="1.5" width="23" height="23" fill="#fff" stroke="#606b66" stroke-width="1.1"/>
  <rect x="7.5" y="6.5" width="13" height="13" fill="#fff" stroke="#7d7d7d" stroke-width="1"/>
  <rect x="7" y="6" width="14" height="2.5" fill="#7d7d7d"/>
  <rect x="11" y="10" width="4.5" height="2.5" fill="#eba04c"/>
  <rect x="10" y="13.2" width="9" height="2" fill="#a8a8a8"/>
  <rect x="14" y="13.2" width="1.5" height="2" fill="#3b8ede"/><rect x="16.5" y="13.2" width="1.5" height="2" fill="#3b8ede"/>
  <rect x="10" y="16.5" width="6.5" height="1.5" fill="#7d7d7d"/>
  <path d="M11.5 4 L5.5 11.5 L9 11.5 L4.5 19.5 L13.5 9 L10 9 L14.5 4 Z" fill="#f6c470" stroke="#fff" stroke-width="0.5"/>
  <circle cx="9.5" cy="8" r="0.7" fill="#eb8a3c"/><circle cx="7.5" cy="12" r="0.7" fill="#eb8a3c"/>
</svg>
<!-- red highlight box with shadows -->
<div style="position:absolute;left:589px;top:219px;width:197px;height:314px;border:3px solid #ff0000;box-shadow:2px 2px 3px rgba(0,0,0,0.5), inset 2px 2px 4px rgba(0,0,0,0.5)"></div>

<!-- vertical scrollbar -->
<div style="position:absolute;left:1175px;top:197px;width:21px;height:507px;background:#e6e6e6"></div>
<div style="position:absolute;left:1178px;top:214px;width:15px;height:476px;background:repeating-linear-gradient(45deg,#dcdcdc 0 1px,#e9e9e9 1px 3px)"></div>
<div style="position:absolute;left:1178px;top:199px;width:15px;height:15px;background:#fff;border:1px solid #c6c6c6"></div>
<svg width="15" height="15" style="position:absolute;left:1178px;top:199px"><path d="M3.5 9 L11.5 9 L7.5 5 Z" fill="#606b66"/></svg>
<div style="position:absolute;left:1178px;top:236px;width:15px;height:129px;background:#fff;border:1px solid #c6c6c6"></div>
<div style="position:absolute;left:1178px;top:689px;width:15px;height:15px;background:#fff;border:1px solid #c6c6c6"></div>
<svg width="15" height="15" style="position:absolute;left:1178px;top:689px"><path d="M3.5 6 L11.5 6 L7.5 10 Z" fill="#606b66"/></svg>

<!-- sheet tabs -->
<div style="position:absolute;left:0;top:704px;width:1196px;height:27px;background:#e6e6e6"></div>
<div style="position:absolute;left:0;top:703px;width:1175px;height:1px;background:#ababab"></div>
<svg width="300" height="27" style="position:absolute;left:0;top:704px">
  <path d="M28 10 L24 13.5 L28 17 Z" fill="#b4b4b4"/>
  <path d="M53 10 L57 13.5 L53 17 Z" fill="#b4b4b4"/>
  <line x1="216.5" y1="4" x2="216.5" y2="24" stroke="#a6a6a6"/>
  <circle cx="258" cy="13" r="6.5" fill="none" stroke="#606b66" stroke-width="1.3"/>
  <path d="M254.5 13 H261.5 M258 9.5 V16.5" stroke="#606b66" stroke-width="1.6"/>
</svg>
<div style="position:absolute;left:97px;top:703px;width:61px;height:25px;background:#fff;border-left:1px solid #c6c6c6;border-right:1px solid #c6c6c6"></div>
<div style="position:absolute;left:97px;top:726px;width:61px;height:2px;background:#217346"></div>
<div class="st" style="left:109px;top:710px;font-size:12.4px;color:#217346;font-weight:bold">Лист1</div>
<div class="st" style="left:170px;top:710px;font-size:12.4px;color:#444">Лист2</div>
<!-- horizontal scrollbar -->
<svg width="10" height="27" style="position:absolute;left:713px;top:704px"><path d="M4.5 9 v1 M4.5 13 v1 M4.5 17 v1" stroke="#b4b4b4" stroke-width="1.5"/></svg>
<div style="position:absolute;left:733px;top:710px;width:442px;height:15px;background:repeating-linear-gradient(45deg,#dcdcdc 0 1px,#e9e9e9 1px 3px)"></div>
<div style="position:absolute;left:733px;top:710px;width:15px;height:15px;background:#fff;border:1px solid #c6c6c6"></div>
<svg width="15" height="15" style="position:absolute;left:733px;top:710px"><path d="M9 3.5 L9 11.5 L5 7.5 Z" fill="#606b66"/></svg>
<div style="position:absolute;left:747px;top:710px;width:387px;height:15px;background:#fff;border:1px solid #c6c6c6"></div>
<div style="position:absolute;left:1160px;top:710px;width:15px;height:15px;background:#fff;border:1px solid #c6c6c6"></div>
<svg width="15" height="15" style="position:absolute;left:1160px;top:710px"><path d="M6 3.5 L6 11.5 L10 7.5 Z" fill="#606b66"/></svg>

<!-- status bar -->
<div style="position:absolute;left:0;top:731px;width:1196px;height:20px;background:#f3f3f3;border-top:1px solid #dadada"></div>
<div class="st" style="left:5px;font-size:11.6px;letter-spacing:0.5px">Готово</div>
<svg width="16" height="16" style="position:absolute;left:68px;top:734px">
  <rect x="2.5" y="3.5" width="11" height="10" fill="none" stroke="#606b66"/>
  <rect x="8" y="2" width="6" height="3" fill="#606b66"/>
  <circle cx="4" cy="4" r="2.6" fill="#606b66"/>
  <path d="M5 7.5 h2 M8 7.5 h2 M11 7.5 h2 M5 9.5 h2 M8 9.5 h2 M11 9.5 h2 M5 11.5 h2 M8 11.5 h2 M11 11.5 h2" stroke="#606b66"/>
</svg>
<div class="st" style="left:581px;font-size:10.9px">Среднее: 22129,35</div>
<div class="st" style="left:692px;font-size:11.3px">Количество: 36</div>
<div class="st" style="left:789px;font-size:10.8px">Сумма: 531104,4</div>
<div style="position:absolute;left:893px;top:732px;width:38px;height:19px;background:#c8c8c8"></div>
<svg width="300" height="20" style="position:absolute;left:896px;top:731px">
  <g fill="none" stroke="#606b66" stroke-width="1.2">
    <rect x="9.5" y="4.5" width="13" height="13"/>
    <path d="M13.8 5 V17 M18.2 5 V17 M10 8.8 H22 M10 13.2 H22"/>
    <rect x="47.5" y="4.5" width="13" height="13"/>
    <rect x="50.5" y="7.5" width="7" height="7"/>
    <path d="M52 9.5 H56 M52 11.5 H56 M52 13 H56"/>
    <path d="M85.5 17.5 V4.5 H98.5 V17.5 M85.5 10.5 H92.5 V4.5 M89.5 4.5 V10.5"/>
  </g>
  <path d="M116 11.5 H122" stroke="#606b66" stroke-width="2"/>
  <path d="M126 11.5 H226" stroke="#b4b4b4" stroke-width="1"/>
  <rect x="174" y="5" width="4" height="11" fill="#606b66"/>
  <path d="M230 11.5 H238 M234 7.5 V15.5" stroke="#606b66" stroke-width="2"/>
</svg>
<div class="st" style="left:1149px;font-size:11px">100%</div>
</body></html>
